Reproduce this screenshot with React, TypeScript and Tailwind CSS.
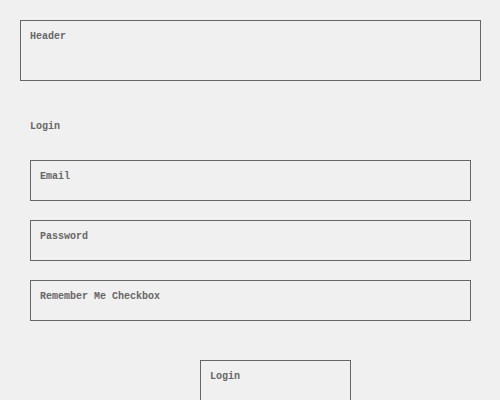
export default function App() {
  const fields = ["Email", "Password", "Remember Me Checkbox"];
  return (
    <div className="h-[400px] w-[500px] overflow-hidden bg-[#f0f0f0] pl-[20px] pt-[20px] font-['Liberation_Mono',monospace] text-[10px] font-bold leading-[12px] text-[#666]">
      <div className="h-[61px] w-[461px] border border-[#666] px-[9px] pt-[10px]">Header</div>
      <div className="pl-[10px]">
        <div className="mt-[40px] h-[39px]">Login</div>
        <div className="flex flex-col gap-[19px]">
          {fields.map((f) => (
            <div key={f} className="h-[41px] w-[441px] border border-[#666] px-[9px] pt-[10px]">
              {f}
            </div>
          ))}
        </div>
        <div className="ml-[170px] mt-[39px] h-[61px] w-[151px] border border-[#666] px-[9px] pt-[10px]">
          Login
        </div>
      </div>
    </div>
  );
}
